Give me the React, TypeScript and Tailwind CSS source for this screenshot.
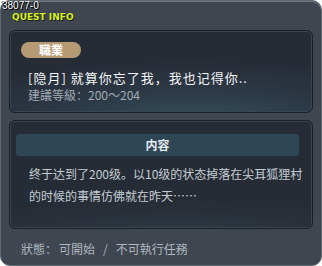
export default function App() {
  return (
    <div className="w-[322px] h-[266px] bg-white" style={{ fontFamily: '"Noto Sans CJK SC", "Noto Sans", sans-serif' }}>
      <div className="relative w-[322px] h-[266px] rounded-[10px] border border-[#5f6771] bg-[#3f4650] shadow-[inset_0_1px_0_#707a84]">
        {/* header labels */}
        <div className="absolute left-[1px] top-[0px] text-[10px] leading-[10px] text-white [text-shadow:1px_1px_0_#000,-1px_0_0_#000]" style={{ fontFamily: '"Liberation Sans", sans-serif' }}>
          38077-0
        </div>
        <div className="absolute left-[11px] top-[10px] text-[9px] leading-[12px] font-bold text-[#d6f01e] [text-shadow:1px_1px_0_#1a1e12]" style={{ fontFamily: '"DejaVu Sans", sans-serif' }}>
          QUEST INFO
        </div>

        <div className="flex flex-col pt-[29px] px-[8px] gap-[7px]">
          {/* job panel */}
          <div className="h-[83px] rounded-[6px] border border-[#1b2028] bg-[radial-gradient(ellipse_90%_80%_at_60%_115%,#34515f_0%,#2c3845_55%,#262c36_100%)] shadow-[inset_0_0_0_1px_#3a4552] px-[11px] pt-[11px]">
            <div className="w-[60px] h-[16px] rounded-full bg-[#b69a74] flex items-center justify-center text-[12px] leading-none font-bold text-white">
              職業
            </div>
            <div className="mt-[12px] pl-[7px] text-[13px] leading-[16px] tracking-[1px] text-[#f2f4f6] whitespace-nowrap">
              [隐月] 就算你忘了我，我也记得你..
            </div>
            <div className="mt-[1px] pl-[7px] text-[12px] leading-[16px] text-[#a0aab4] whitespace-nowrap">
              建議等級：200～204
            </div>
          </div>

          {/* content panel */}
          <div className="h-[109px] rounded-[6px] border border-[#1b2028] bg-[radial-gradient(ellipse_90%_40%_at_55%_110%,#2e3c49_0%,#29303a_60%,#262c36_100%)] shadow-[inset_0_0_0_1px_#3a4552] pl-[6px] pr-[13px] pt-[13px]">
            <div className="h-[22px] rounded-[3px] bg-[#2f4655] flex items-center justify-center text-[12px] font-bold text-[#e4eaee]">
              内容
            </div>
            <div className="mt-[7px] pl-[13px] text-[12px] leading-[22px] text-[#c4ccd4] whitespace-nowrap">
              <div>终于达到了200级。以10级的状态掉落在尖耳狐狸村</div>
              <div>的时候的事情仿佛就在昨天……</div>
            </div>
          </div>
        </div>

        <div className="mt-[12px] pl-[20px] flex text-[12px] leading-[16px] text-[#aeb6be] whitespace-nowrap">
          <span>狀態：</span>
          <span className="ml-[2px]">可開始</span>
          <span className="mx-[8px]">/</span>
          <span>不可執行任務</span>
        </div>
      </div>
    </div>
  );
}
